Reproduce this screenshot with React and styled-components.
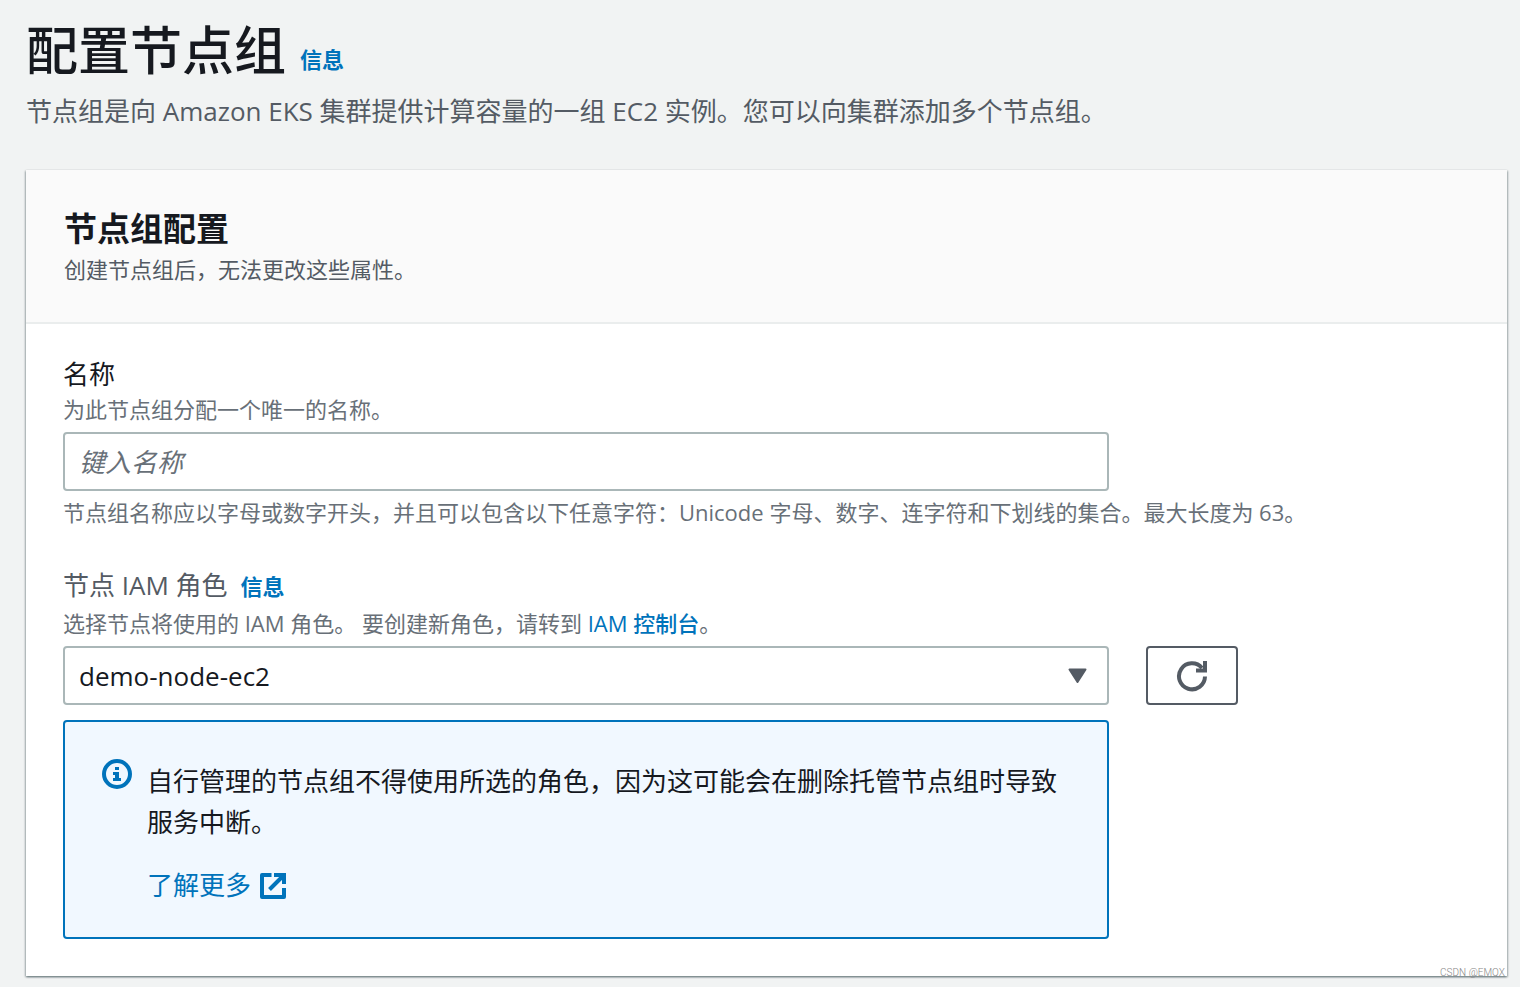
import styled, { createGlobalStyle } from 'styled-components';

const colors = {
  page: '#f1f3f3',
  text: '#16191f',
  secondary: '#545b64',
  hint: '#687078',
  link: '#0073bb',
  border: '#aab7b8',
};

const GlobalStyle = createGlobalStyle`
  * {
    box-sizing: border-box;
  }

  body {
    margin: 0;
    background: ${colors.page};
    color: ${colors.text};
    font-family: 'Open Sans', 'Noto Sans CJK SC', sans-serif;
    font-size: 26px;
  }
`;

const Page = styled.main`
  position: relative;
  padding: 17px 13px 11px 26px;
`;

const InfoLink = styled.a`
  color: ${colors.link};
  font-size: 22px;
  font-weight: 700;
  text-decoration: none;
`;

const TitleRow = styled.div`
  display: flex;
  align-items: flex-end;
  gap: 14px;

  ${InfoLink} {
    line-height: 48px;
  }
`;

const Title = styled.h1`
  margin: 0;
  font-size: 52px;
  font-weight: 500;
  line-height: 66px;
`;

const Description = styled.p`
  margin: 8px 0 39px;
  color: ${colors.secondary};
  line-height: 40px;
`;

const Card = styled.section`
  background: white;
  box-shadow: 0 1px 2px 0 rgba(0, 28, 36, 0.4), 1px 1px 2px 0 rgba(0, 28, 36, 0.2), -1px 1px 2px 0 rgba(0, 28, 36, 0.2);
`;

const CardHeader = styled.header`
  padding: 38px 38px 33px;
  background: #fafafa;
  border-bottom: 2px solid #eaeded;
`;

const CardTitle = styled.h2`
  margin: 0;
  font-size: 33px;
  font-weight: 700;
  line-height: 41px;
`;

const CardSubtitle = styled.p`
  margin: 0;
  color: ${colors.secondary};
  font-size: 22px;
  line-height: 40px;
`;

const CardBody = styled.div`
  display: flex;
  flex-direction: column;
  gap: 38px;
  padding: 32px 37px 33px;
`;

const Field = styled.div`
  display: flex;
  flex-direction: column;
`;

const LabelRow = styled.div`
  display: flex;
  align-items: flex-start;
  gap: 13px;
  height: 39px;

  ${InfoLink} {
    line-height: 38px;
  }
`;

const Label = styled.label`
  color: ${props => props.$muted ? colors.secondary : colors.text};
  line-height: 36px;
`;

const Hint = styled.p`
  margin: 0;
  color: ${colors.hint};
  font-size: 22px;
  line-height: 34px;
`;

const HintLink = styled.a`
  color: ${colors.link};
  font-weight: 500;
  text-decoration: none;
`;

const ControlGrid = styled.div`
  display: grid;
  grid-template-columns: 3fr 1fr;
  gap: 15px 12px;
  margin: 6px 0 4px;
`;

const TextInput = styled.input`
  width: 100%;
  height: 59px;
  padding: 0 14px;
  border: 2px solid ${colors.border};
  border-radius: 4px;
  background: white;
  color: ${colors.text};
  font: inherit;

  &::placeholder {
    color: ${colors.hint};
    font-style: italic;
    opacity: 1;
  }
`;

const SelectWrapper = styled.div`
  position: relative;
`;

const Select = styled.select`
  display: block;
  width: 100%;
  height: 59px;
  padding: 0 56px 0 14px;
  appearance: none;
  border: 2px solid ${colors.border};
  border-radius: 4px;
  background: white;
  color: ${colors.text};
  font: inherit;
`;

const Caret = styled.svg`
  position: absolute;
  top: 22px;
  right: 22px;
  pointer-events: none;
`;

const RefreshButton = styled.button`
  display: flex;
  align-items: center;
  justify-content: center;
  width: 92px;
  height: 59px;
  margin-left: 25px;
  padding: 0;
  border: 2px solid ${colors.secondary};
  border-radius: 4px;
  background: white;
  color: ${colors.secondary};
`;

const Alert = styled.div`
  display: flex;
  align-items: flex-start;
  gap: 15px;
  padding: 37px 36px 31px 37px;
  border: 2px solid ${colors.link};
  border-radius: 4px;
  background: #f1f8ff;
  line-height: 41px;

  > svg {
    flex: none;
  }
`;

const AlertContent = styled.div`
  display: flex;
  flex-direction: column;
  align-items: flex-start;
  gap: 22px;
  padding-top: 2px;
`;

const AlertText = styled.p`
  margin: 0;
`;

const AlertLink = styled.a`
  display: flex;
  align-items: center;
  gap: 8px;
  color: ${colors.link};
  text-decoration: none;
`;

const Watermark = styled.span`
  position: absolute;
  right: 15px;
  bottom: 7px;
  color: #888;
  font-family: Roboto, sans-serif;
  font-size: 10px;
  font-weight: 300;
  line-height: 14px;
`;

function RefreshIcon() {
  return (
    <svg width="32" height="32" viewBox="0 0 32 32" fill="none" stroke="currentColor" strokeWidth="4" aria-hidden="true">
      <path d="M29 16.500A13 13 0 1 1 26 8" />
      <path d="M29 1V10.500H20" />
    </svg>
  );
}

function InfoIcon() {
  return (
    <svg width="30" height="30" viewBox="0 0 30 30" aria-hidden="true">
      <circle cx="15" cy="15" r="13" fill="none" stroke={colors.link} strokeWidth="4" />
      <path d="M13 8h4v3h-4zM11 13h6v6h2v3h-8v-3h2v-3h-2z" fill={colors.link} />
    </svg>
  );
}

function ExternalIcon() {
  return (
    <svg width="28" height="28" viewBox="0 0 28 28" fill="none" stroke="currentColor" strokeWidth="4" aria-hidden="true">
      <path d="M12.500 3H3v22h22v-9" strokeLinejoin="round" />
      <path d="M15 3h10v9M25 3L10.500 17.500" />
    </svg>
  );
}

function App() {
  return (
    <>
      <GlobalStyle />
      <Page>
        <TitleRow>
          <Title>配置节点组</Title>
          <InfoLink href="#info">信息</InfoLink>
        </TitleRow>
        <Description>
          节点组是向 Amazon EKS 集群提供计算容量的一组 EC2 实例。您可以向集群添加多个节点组。
        </Description>

        <Card>
          <CardHeader>
            <CardTitle>节点组配置</CardTitle>
            <CardSubtitle>创建节点组后，无法更改这些属性。</CardSubtitle>
          </CardHeader>
          <CardBody>
            <Field>
              <Label htmlFor="name">名称</Label>
              <Hint>为此节点组分配一个唯一的名称。</Hint>
              <ControlGrid>
                <TextInput id="name" type="text" placeholder="键入名称" />
              </ControlGrid>
              <Hint>
                节点组名称应以字母或数字开头，并且可以包含以下任意字符：Unicode 字母、数字、连字符和下划线的集合。最大长度为 63。
              </Hint>
            </Field>

            <Field>
              <LabelRow>
                <Label htmlFor="role" $muted>节点 IAM 角色</Label>
                <InfoLink href="#role-info">信息</InfoLink>
              </LabelRow>
              <Hint>
                选择节点将使用的 IAM 角色。 要创建新角色，请转到 <HintLink href="#iam">IAM 控制台</HintLink>。
              </Hint>
              <ControlGrid>
                <SelectWrapper>
                  <Select id="role" defaultValue="demo-node-ec2">
                    <option value="demo-node-ec2">demo-node-ec2</option>
                  </Select>
                  <Caret width="19" height="16" viewBox="0 0 19 16" aria-hidden="true">
                    <path d="M1.500 1.500h16L9.500 14z" fill={colors.secondary} stroke={colors.secondary} strokeWidth="2" strokeLinejoin="round" />
                  </Caret>
                </SelectWrapper>
                <RefreshButton type="button" aria-label="刷新">
                  <RefreshIcon />
                </RefreshButton>
                <Alert>
                  <InfoIcon />
                  <AlertContent>
                    <AlertText>
                      自行管理的节点组不得使用所选的角色，因为这可能会在删除托管节点组时导致服务中断。
                    </AlertText>
                    <AlertLink href="#more">
                      了解更多
                      <ExternalIcon />
                    </AlertLink>
                  </AlertContent>
                </Alert>
              </ControlGrid>
            </Field>
          </CardBody>
        </Card>
        <Watermark>CSDN @EMQX</Watermark>
      </Page>
    </>
  );
}

export default App;
